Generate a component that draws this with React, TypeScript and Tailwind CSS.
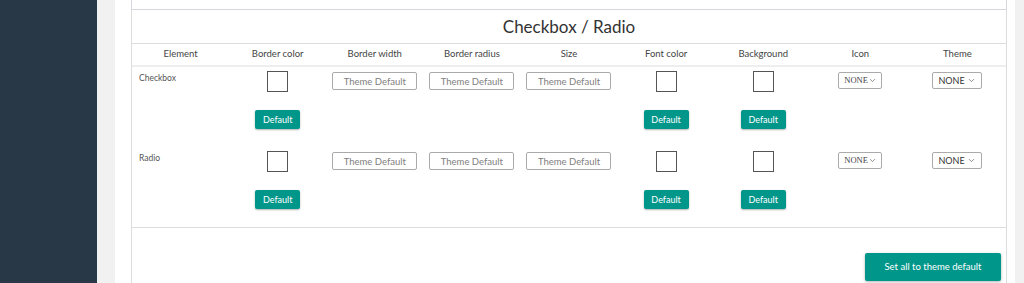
import { ChevronDown } from "lucide-react";

const columns = [
  "Element",
  "Border color",
  "Border width",
  "Border radius",
  "Size",
  "Font color",
  "Background",
  "Icon",
  "Theme",
];

const rows = ["Checkbox", "Radio"];

function ColorBox({ withButton }: { withButton: boolean }) {
  return (
    <div className="flex flex-col items-center pt-[4px]">
      <div className="h-[21px] w-[21px] border border-[#555]" />
      {withButton && (
        <button className="mt-[18px] h-[19px] w-[45px] rounded-[2px] bg-[#00968a] text-[9px] text-white shadow-[0_1px_2px_rgba(0,0,0,0.3)]">
          Default
        </button>
      )}
    </div>
  );
}

function ThemeInput() {
  return (
    <div className="flex justify-center pt-[5px]">
      <input
        placeholder="Theme Default"
        className="h-[18px] w-[85px] rounded-[2px] border border-[#aaa] text-center text-[9.5px] text-[#555] placeholder:text-[#808080] outline-none"
      />
    </div>
  );
}

function IconSelect() {
  return (
    <div className="flex justify-center pt-[5px]">
      <div className="flex h-[17px] w-[44px] items-center justify-between rounded-[2px] border border-[#aaa] pl-[5px] pr-[4px] font-['Liberation_Serif',serif] text-[8.5px] text-[#444]">
        <span>NONE</span>
        <ChevronDown size={9} strokeWidth={1.75} className="shrink-0 text-[#555]" />
      </div>
    </div>
  );
}

function ThemeSelect() {
  return (
    <div className="flex justify-center pt-[5px]">
      <div className="flex h-[17px] w-[50px] items-center justify-between rounded-[2px] border border-[#aaa] pl-[5px] pr-[5px] text-[9px] text-[#333]">
        <span>NONE</span>
        <ChevronDown size={9} strokeWidth={1.75} className="shrink-0 text-[#555]" />
      </div>
    </div>
  );
}

function Row({ label }: { label: string }) {
  return (
    <div className="grid h-[80px] grid-cols-9">
      <div className="pl-[7px] pt-[5px] text-[8.5px] text-[#555]">{label}</div>
      <ColorBox withButton />
      <ThemeInput />
      <ThemeInput />
      <ThemeInput />
      <ColorBox withButton />
      <ColorBox withButton />
      <IconSelect />
      <ThemeSelect />
    </div>
  );
}

export default function App() {
  return (
    <div className="flex h-[283px] overflow-hidden bg-[#f1f1f1] font-['Lato',sans-serif]">
      <aside className="w-[97px] shrink-0 bg-[#293846]" />
      <main className="ml-[18px] w-[900px] shrink-0 bg-white pl-[16px] pr-[8px]">
        {/* tail of the previous section */}
        <div className="h-[10px] border-x border-b border-[#d6d6dc]" />

        <section className="border-x border-[#ddd]">
          <h2 className="flex h-[33px] items-center justify-center pt-[1px] text-[17px] text-[#333]">
            Checkbox / Radio
          </h2>

          <div className="grid h-[24px] grid-cols-9 items-center border-y border-t-[#ddd] border-b-2 border-b-[#eee] text-center text-[9.5px] text-[#444]">
            {columns.map((c) => (
              <div key={c}>{c}</div>
            ))}
          </div>

          <div className="border-b border-[#ddd]">
            {rows.map((r) => (
              <Row key={r} label={r} />
            ))}
          </div>

          <div className="flex justify-end pr-[5px] pt-[25px] pb-[10px]">
            <button className="h-[28px] w-[136px] rounded-[2px] bg-[#00968a] text-[9.5px] text-white shadow-[0_1px_3px_rgba(0,0,0,0.3)]">
              Set all to theme default
            </button>
          </div>
        </section>
      </main>
    </div>
  );
}
